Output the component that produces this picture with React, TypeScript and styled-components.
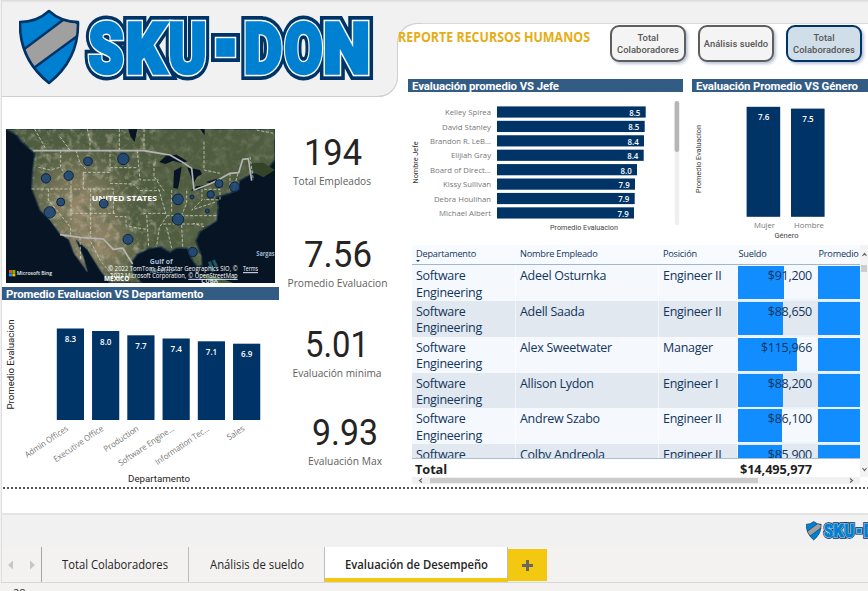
import React from "react";
import styled, { createGlobalStyle } from "styled-components";

const SANS = '"Open Sans", "Noto Sans", sans-serif';
const DIN = 'Roboto, "Liberation Sans", sans-serif';
const NAVY = "#003366";

const GlobalStyle = createGlobalStyle`
  * { box-sizing: border-box; }
  body { margin: 0; overflow: hidden; background: #f1f1f1; font-family: ${SANS}; }
`;

const Window = styled.div`
  width: 868px;
  height: 591px;
  overflow: hidden;
  display: flex;
  flex-direction: column;
  background: #f1f1f1;
`;

const Canvas = styled.main`
  height: 515px;
  flex: none;
  display: flex;
  margin-left: 1px;
  border-left: 1px solid #dedede;
  border-bottom: 2px solid #e3e3e3;
  background: #fff;
  position: relative;
  &::before {
    content: "";
    position: absolute;
    z-index: 1;
    inset: 0 0 auto 0;
    height: 3px;
    background: linear-gradient(#d9d9d9, #f1f1f1);
  }
  &::after {
    content: "";
    position: absolute;
    left: 1px;
    right: 0;
    top: 487px;
    height: 2px;
    background: repeating-linear-gradient(90deg, #555 0 2px, #fff 2px 4px);
  }
`;

const LeftSide = styled.div`
  width: 396px;
  flex: none;
  display: flex;
  flex-direction: column;
`;

const LogoPanel = styled.header`
  height: 97px;
  padding: 9px 0 0 17px;
  background: #f1f1f1;
  border-bottom: 1px solid #cfcfcf;
  border-radius: 0 0 20px 0;
  position: relative;
  &::after {
    content: "";
    position: absolute;
    right: 0;
    bottom: -1px;
    width: 24px;
    height: 54px;
    border: solid #cfcfcf;
    border-width: 0 1px 1px 0;
    border-radius: 0 0 20px 0;
  }
`;

const LeftBody = styled.div`
  display: flex;
  padding-top: 32px;
`;

const LeftCharts = styled.div`
  width: 277px;
  svg { display: block; }
`;

const MapFrame = styled.div`
  margin: 0 0 4px 4px;
  height: 154px;
`;

const TitleBar = styled.h2<{ $w: number }>`
  margin: 0;
  width: ${(p) => p.$w}px;
  height: 13px;
  padding-left: 4px;
  background: #335c85;
  color: #fff;
  font: 700 11.4px/14px ${DIN};
  letter-spacing: -0.1px;
  white-space: nowrap;
`;

const Kpis = styled.div`
  width: 119px;
  display: flex;
  flex-direction: column;
`;

const Kpi = styled.div<{ $h: number }>`
  height: ${(p) => p.$h}px;
  svg { display: block; }
`;

const RightSide = styled.div`
  width: 470px;
  background: linear-gradient(#f1f1f1 97px, #fff 97px);
  padding-top: 23px;
`;

const RightPanel = styled.div`
  height: 490px;
  background: #fff;
  border-radius: 20px 0 0 0;
  border-top: 1px solid #d8d8d8;
  position: relative;
  &::before {
    content: "";
    position: absolute;
    left: -1px;
    top: -1px;
    width: 24px;
    height: 22px;
    border: solid #cfcfcf;
    border-width: 1px 0 0 1px;
    border-radius: 20px 0 0 0;
  }
`;

const HeadRow = styled.div`
  display: flex;
  height: 55px;
  padding-top: 1px;
`;

const ReportTitle = styled.h1`
  margin: 0;
  width: 212px;
  flex: none;
  padding-top: 2px;
  position: relative;
  svg { display: block; }
`;

const NavButtons = styled.div`
  display: flex;
  gap: 12px;
`;

const NavButton = styled.button<{ $active?: boolean }>`
  width: 76px;
  height: 37px;
  padding: 0;
  flex: none;
  border: 2px solid ${(p) => (p.$active ? NAVY : "#605e5c")};
  border-radius: 9px;
  background: ${(p) => (p.$active ? "#d0deea" : "#f4f4f4")};
  color: #555;
  box-shadow: 2px 2px 3px rgba(60, 90, 150, 0.35);
  font: 500 9.4px/12px ${DIN};
  letter-spacing: 0.05px;
`;

const ChartRow = styled.div`
  display: flex;
  gap: 9px;
  padding-left: 10px;
  svg { display: block; }
`;

const TableFrame = styled.section`
  display: grid;
  grid-template-columns: 448px 8px;
  grid-template-rows: 214px 18px 7px;
  margin: 6px 0 0 14px;
  color: #12355b;
`;

const Cols = styled.div`
  display: grid;
  grid-template-columns: 104px 143px 79px 80px 42px;
`;

const TableClip = styled.div`
  overflow: hidden;
  border-bottom: 1px solid #a9bdd4;
`;

const HeadCells = styled(Cols)`
  height: 20px;
  border-bottom: 1px solid #9fb6d1;
  background: #f7fafe;
  font: 9.2px/18px ${SANS};
  letter-spacing: -0.22px;
  white-space: nowrap;
`;

const HeadCell = styled.div<{ $sorted?: boolean; $pad?: number }>`
  padding-left: ${(p) => p.$pad ?? 4}px;
  position: relative;
  &::after {
    content: "";
    display: ${(p) => (p.$sorted ? "block" : "none")};
    position: absolute;
    left: 4px;
    top: 15px;
    border: 2.5px solid transparent;
    border-top-color: #12355b;
  }
`;

const Row = styled(Cols)<{ $odd: boolean }>`
  height: 35.85px;
  background: ${(p) => (p.$odd ? "#e1e8f0" : "#f5f9fe")};
  font: 12.5px/16.5px ${SANS};
  letter-spacing: -0.28px;
`;

const Cell = styled.div`
  padding: 3px 0 0 4px;
  border-right: 1px solid rgba(255, 255, 255, 0.6);
  white-space: pre-line;
`;

const BarCell = styled.div<{ $w: number }>`
  padding: 3px 6px 0 0;
  text-align: right;
  border-bottom: 2px solid #eaf2fb;
  background: linear-gradient(#118dff, #118dff) 0 1px / ${(p) => p.$w}px 100% no-repeat;
`;

const TotalRow = styled(Cols)`
  color: #1f1f1f;
  font: 700 12.8px/20px ${SANS};
  letter-spacing: -0.1px;
`;

const TotalCell = styled.div<{ $right?: boolean }>`
  padding: 0 6px 0 3px;
  display: flex;
  white-space: nowrap;
  justify-content: ${(p) => (p.$right ? "flex-end" : "flex-start")};
`;

const VScroll = styled.div`
  grid-row: 1 / 3;
  grid-column: 2;
  background: #f3f3f3;
  display: flex;
  flex-direction: column;
  align-items: center;
  justify-content: space-between;
  padding: 7px 0 5px;
`;

const VTop = styled.div`
  display: flex;
  flex-direction: column;
  align-items: center;
  gap: 8px;
`;

const VThumb = styled.div`
  width: 6px;
  height: 7px;
  background: #cdcdcd;
`;

const HScroll = styled.div`
  height: 7px;
  background: #f1f1f1;
  display: flex;
  align-items: center;
  padding: 0 6px;
`;

const HThumb = styled.div`
  width: 328px;
  height: 5px;
  margin: 0 auto 0 7px;
  background: #cbcbcb;
`;

const Strip = styled.div`
  height: 32px;
  flex: none;
  margin-left: 1px;
  border-left: 1px solid #dedede;
  display: flex;
  justify-content: flex-end;
  overflow: hidden;
`;

const MiniLogo = styled.div`
  width: 62px;
  padding-top: 6px;
  flex: none;
`;

const TabBar = styled.nav`
  height: 36px;
  flex: none;
  display: flex;
  margin-left: 1px;
  border-left: 1px solid #dedede;
  border-bottom: 1px solid #d8d8d8;
  background: #f3f2f1;
`;

const Arrows = styled.div`
  width: 40px;
  padding: 13px 0 0 6px;
  border-right: 1px solid #a5a5a5;
  svg { display: block; }
`;

const Tab = styled.div<{ $w: number; $active?: boolean }>`
  width: ${(p) => p.$w}px;
  height: 35px;
  flex: none;
  display: flex;
  justify-content: center;
  border-right: 1px solid #bdbdbd;
  border-bottom: ${(p) => (p.$active ? "4px solid #f2c811" : "0")};
  background: ${(p) => (p.$active ? "#fff" : "#f3f2f1")};
  svg { display: block; }
`;

const AddTab = styled.div`
  width: 39px;
  height: 32px;
  margin-top: 2px;
  display: grid;
  place-items: center;
  background: #f2c811;
`;

const StatusBar = styled.footer`
  height: 8px;
  flex: none;
  overflow: hidden;
  padding: 3px 0 0 13px;
  background: #f3f2f1;
  color: #333;
  font: 11px/14px ${SANS};
`;

type LabelProps = {
  x: number;
  y: number;
  w: number;
  size: number;
  children: string;
  fill?: string;
  weight?: number;
  font?: string;
  rotate?: number;
};

/* A chart label set to an exact advance width. */
const Label = ({ x, y, w, size, children, fill = "#777", weight = 400, font = SANS, rotate }: LabelProps) => (
  <text
    x={x}
    y={y}
    textLength={w}
    lengthAdjust="spacingAndGlyphs"
    fontSize={size}
    fontFamily={font}
    fontWeight={weight}
    fill={fill}
    transform={rotate ? `rotate(${rotate} ${x} ${y})` : undefined}
  >
    {children}
  </text>
);

const logoLetters: [string, number, number][] = [
  ["S", 69.5, 35],
  ["K", 107, 40],
  ["U", 149.5, 38],
  ["D", 225, 38],
  ["O", 265.5, 38],
  ["N", 304, 47],
];

const SHIELD = "M30 2Q42 13 59 13Q60 50 30 74Q0 50 1 13Q18 13 30 2Z";

const Logo = ({ width, id }: { width: number; id: string }) => (
  <svg width={width} viewBox="0 0 358 76">
    <defs>
      <clipPath id={`${id}-shield`}>
        <path d={SHIELD} />
      </clipPath>
      <g id={`${id}-word`} strokeMiterlimit="3" fontFamily="Roboto, sans-serif" fontWeight={900} fontSize={70}>
        {logoLetters.map(([c, x, w]) => (
          <text key={c} x={x} y={63.5} textLength={w} lengthAdjust="spacingAndGlyphs">{c}</text>
        ))}
        <rect x="199" y="31" width="15" height="15" />
      </g>
    </defs>
    <g clipPath={`url(#${id}-shield)`}>
      <rect width="60" height="76" fill="#0080d0" />
      <path d="M-4 47L48 8L68 20L8 64Z" fill="#a0a0a0" stroke={NAVY} strokeWidth="2.4" />
    </g>
    <path d={SHIELD} fill="none" stroke={NAVY} strokeWidth="2.6" strokeLinejoin="round" />
    <use href={`#${id}-word`} fill={NAVY} stroke={NAVY} strokeWidth="14" strokeLinejoin="miter" />
    <use href={`#${id}-word`} fill="#fff" stroke="#fff" strokeWidth="6.5" strokeLinejoin="miter" />
    <use href={`#${id}-word`} fill="#0080d0" stroke="#0080d0" strokeWidth="3.6" strokeLinejoin="miter" />
  </svg>
);

const bubbles: [number, number, number][] = [
  [264, 124, 13], [370, 117, 17], [138, 175, 14], [206, 167, 14], [182, 246, 12],
  [149, 277, 17], [311, 251, 13], [534, 238, 16], [534, 298, 17], [576, 231, 6],
  [632, 223, 11], [657, 191, 12], [704, 201, 15], [622, 273, 6], [384, 358, 15], [578, 396, 14],
];

const LAND =
  "M18 27L50 45L62 62L104 100L98 150L95 205L120 270L150 300L180 342L206 358L222 400L262 455L250 410L226 358L262 388L300 450L330 489H425L398 455L396 425L412 403L450 385L482 380L510 397L530 384L562 385L574 415L592 441L606 436L604 408L588 362L600 335L650 302L655 262L650 232L690 220L716 208L718 182L756 160L800 150L825 120V27Z";

const STATES =
  "M182 91V142L208 182M115 142L150 150L180 142M95 207H240M145 207V240L212 322V345M213 182V300M228 91L240 130L262 150M250 157V207M250 157H330V91M250 207H340V280M212 280H345M272 207V352M330 143H412M330 190L400 192L420 212H480M340 240H430M345 290H378V318L440 328M412 91L420 180H476M476 207L490 255L500 290L478 322L470 380M430 280H500M440 285L446 380M500 322L515 385M545 315L548 380M490 312H610M500 287H650M462 130V170L494 215M515 210V275M560 212V250L545 285M606 208V240L575 270L650 245M612 208H660V240L612 238M612 320L580 310M690 160V210M700 210L714 160M660 176V205M262 27L270 60V90M358 27V91M432 27V85M612 65V150L660 160M180 50L210 91M104 27L140 91M820 40L770 30M750 110L760 180M240 352L242 420M272 365L300 420L340 470";

const Lake = styled.path`
  fill: #081424;
`;

const UsMap = () => (
  <svg width="269" height="154" viewBox="18 27 807 462">
    <defs>
      <radialGradient id="dry" cx="0.5" cy="0.5" r="0.5">
        <stop offset="0" stopColor="#a08e70" stopOpacity="0.9" />
        <stop offset="1" stopColor="#a08e70" stopOpacity="0" />
      </radialGradient>
      <filter id="terrain" x="0" y="0" width="100%" height="100%">
        <feTurbulence type="fractalNoise" baseFrequency="0.028" numOctaves="5" seed="8" />
        <feColorMatrix values="0 0 0 0 0.12  0 0 0 0 0.15  0 0 0 0 0.08  2.2 0 0 0 -1.1" />
      </filter>
      <filter id="relief" x="0" y="0" width="100%" height="100%">
        <feTurbulence type="fractalNoise" baseFrequency="0.05" numOctaves="4" seed="21" />
        <feColorMatrix values="0 0 0 0 0.68  0 0 0 0 0.64  0 0 0 0 0.52  0 2.4 0 0 -1.15" />
      </filter>
      <clipPath id="land"><path d={LAND} /></clipPath>
    </defs>
    <rect x="18" y="27" width="807" height="462" fill="#071424" />
    <path d={LAND} fill="#4f5c3f" stroke="#1c3442" strokeWidth="5" />
    <g clipPath="url(#land)">
      <ellipse cx="235" cy="260" rx="170" ry="190" fill="url(#dry)" />
      <ellipse cx="300" cy="380" rx="130" ry="120" fill="url(#dry)" />
      <rect x="18" y="27" width="807" height="462" filter="url(#terrain)" />
      <rect x="18" y="27" width="450" height="462" filter="url(#relief)" opacity="0.5" />
      <rect x="468" y="27" width="357" height="462" filter="url(#relief)" opacity="0.2" />
    </g>
    <Lake d="M478 126L500 106L530 104L562 124L545 130L520 122L496 132Z" />
    <Lake d="M522 152L545 140L540 175L534 206L520 204Z" />
    <Lake d="M562 142L600 150L606 162L592 170L580 190L572 168Z" />
    <Lake d="M572 212L590 198L622 196L596 210Z" />
    <Lake d="M618 186L650 176L654 182L630 190Z" />
    <Lake d="M385 27H412L404 66L392 50ZM600 27H614V45Z" />
    <path d="M740 130L790 128L825 150L790 172L765 160Z" fill="#344429" />
    <path d="M600 462L650 470L700 489H640Z" fill="#42603a" />
    <path d="M628 425L640 455M650 440L640 420" stroke="#2e8291" strokeWidth="9" opacity="0.6" />
    <path d={STATES} fill="none" stroke="#d0d3c2" strokeWidth="2.8" strokeDasharray="9 5" opacity="0.85" />
    <path
      d="M100 92H432L480 100L510 105L545 125L575 145L582 210L620 196L650 182L690 160L716 158L728 118L745 116L755 182M180 344L240 352L310 357L340 388L368 384L398 432"
      fill="none"
      stroke="#b5b5b5"
      strokeWidth="5"
      strokeLinejoin="round"
    />
    <Label x={275} y={244} w={196} size={23} weight={700} fill="#fff">UNITED STATES</Label>
    <Label x={449} y={433} w={69} size={20} weight={700} fill="#a6bdd3">Gulf of</Label>
    <Label x={449} y={459} w={70} size={19} weight={600} fill="#7892ab">Mexico</Label>
    <Label x={769} y={408} w={55} size={19} weight={700} fill="#9fb8d0">Sargas</Label>
    <Label x={312} y={484} w={76} size={20} weight={700} fill="#fff">MEXICO</Label>
    <Label x={604} y={488} w={50} size={18} weight={700} fill="#dce6ec">CUBA</Label>
    <Label x={325} y={454} w={388} size={19} fill="#fff">© 2022 TomTom, Earthstar Geographics SIO, ©</Label>
    <Label x={331} y={474} w={228} size={19} fill="#fff">2022 Microsoft Corporation,</Label>
    <Label x={565} y={474} w={148} size={19} fill="#fff">© OpenStreetMap</Label>
    <Label x={729} y={454} w={45} size={19} fill="#fff">Terms</Label>
    <Label x={50} y={466} w={106} size={17} weight={600} fill="#eee">Microsoft Bing</Label>
    <path d="M565 478H713M729 458H774" stroke="#dfe8ff" strokeWidth="3" />
    <rect x="27" y="450" width="9" height="9" fill="#f25022" />
    <rect x="37" y="450" width="9" height="9" fill="#7fba00" />
    <rect x="27" y="460" width="9" height="9" fill="#00a4ef" />
    <rect x="37" y="460" width="9" height="9" fill="#ffb900" />
    {bubbles.map(([x, y, r]) => (
      <circle key={`${x}-${y}`} cx={x} cy={y} r={r} fill="#1c4577" fillOpacity="0.85" stroke="#0a2447" strokeWidth="3" />
    ))}
  </svg>
);

const departments = [
  { name: "Admin Offices", value: "8.3", h: 91.5, len: 50 },
  { name: "Executive Office", value: "8.0", h: 89, len: 58 },
  { name: "Production", value: "7.7", h: 84.7, len: 40 },
  { name: "Software Engine...", value: "7.4", h: 81.5, len: 65 },
  { name: "Information Tec...", value: "7.1", h: 78.7, len: 63 },
  { name: "Sales", value: "6.9", h: 76.3, len: 19 },
];

const LABEL_ANGLE = 34;

const DepartmentChart = () => (
  <svg width="277" height="187" viewBox="2 300 277 187">
    <Label x={14} y={409.5} w={90} size={9.2} fill="#252423" font={DIN} rotate={-90}>Promedio Evaluacion</Label>
    {departments.map((d, i) => {
      const x = 56.8 + i * 35.25;
      const top = 420 - d.h;
      const a = (LABEL_ANGLE * Math.PI) / 180;
      return (
        <g key={d.name}>
          <rect x={x} y={top} width="27.2" height={d.h} fill={NAVY} />
          <Label x={x + 8} y={top + 13.5} w={11.4} size={8.2} fill="#fff" weight={600}>{d.value}</Label>
          <Label
            x={x + 12 - d.len * Math.cos(a)}
            y={430 + d.len * Math.sin(a)}
            w={d.len}
            size={8.4}
            rotate={-LABEL_ANGLE}
          >
            {d.name}
          </Label>
        </g>
      );
    })}
    <Label x={128} y={482} w={62} size={9.6} fill="#252423" font={DIN}>Departamento</Label>
  </svg>
);

const bosses = [
  { name: "Kelley Spirea", value: "8.5", w: 148.7, len: 46 },
  { name: "David Stanley", value: "8.5", w: 147.7, len: 49 },
  { name: "Brandon R. LeB...", value: "8.4", w: 147, len: 61 },
  { name: "Elijiah Gray", value: "8.4", w: 146.7, len: 40 },
  { name: "Board of Direct...", value: "8.0", w: 140, len: 61 },
  { name: "Kissy Sullivan", value: "7.9", w: 138, len: 48 },
  { name: "Debra Houlihan", value: "7.9", w: 137.7, len: 57 },
  { name: "Michael Albert", value: "7.9", w: 137, len: 52 },
];

const BossChart = () => (
  <svg width="275" height="147" viewBox="408 92 275 147">
    <Label x={418} y={183.5} w={42} size={6.6} fill="#333" font={DIN} rotate={-90}>Nombre Jefe</Label>
    {bosses.map((b, i) => {
      const y = 106.4 + i * 14.42;
      return (
        <g key={b.name}>
          <Label x={491 - b.len} y={y + 8.8} w={b.len} size={8}>{b.name}</Label>
          <rect x="497" y={y} width={b.w} height="11.2" fill={NAVY} />
          <Label x={497 + b.w - 16.5} y={y + 9.5} w={11.2} size={8.2} fill="#fff" weight={600}>{b.value}</Label>
        </g>
      );
    })}
    <Label x={550} y={230} w={68} size={7} fill="#444" font={DIN}>Promedio Evaluacion</Label>
    <rect x="674.6" y="101" width="4.6" height="124" rx="2.3" fill="#efefef" />
    <rect x="674.6" y="101" width="4.6" height="51" rx="2.3" fill="#b5b5b5" />
  </svg>
);

const GenderChart = () => (
  <svg width="176" height="147" viewBox="692 92 176 147">
    <Label x={701} y={193} w={68} size={6.8} fill="#444" font={DIN} rotate={-90}>Promedio Evaluacion</Label>
    <rect x="746.6" y="106.8" width="33.6" height="110" fill={NAVY} />
    <rect x="791" y="108.6" width="33.6" height="108.2" fill={NAVY} />
    <Label x={758} y={120} w={11.4} size={8.2} fill="#fff" weight={600}>7.6</Label>
    <Label x={802.3} y={122} w={11.4} size={8.2} fill="#fff" weight={600}>7.5</Label>
    <Label x={754} y={228} w={21} size={8}>Mujer</Label>
    <Label x={794} y={228} w={30} size={8}>Hombre</Label>
    <Label x={774.5} y={238} w={24} size={6.8} fill="#444" font={DIN}>Género</Label>
  </svg>
);

const kpis = [
  { value: "194", label: "Total Empleados", h: 101.5, vx: 26, vw: 56, lx: 14, lw: 78 },
  { value: "7.56", label: "Promedio Evaluacion", h: 90, vx: 26, vw: 66, lx: 8.5, lw: 100 },
  { value: "5.01", label: "Evaluación minima", h: 88.5, vx: 27, vw: 62, lx: 13.5, lw: 89 },
  { value: "9.93", label: "Evaluación Max", h: 70, vx: 34, vw: 64, lx: 29, lw: 74 },
];

const rows: [string, string, string, number][] = [
  ["Adeel Osturnka", "Engineer II", "$91,200", 46],
  ["Adell Saada", "Engineer II", "$88,650", 45],
  ["Alex Sweetwater", "Manager", "$115,966", 59],
  ["Allison Lydon", "Engineer I", "$88,200", 45],
  ["Andrew Szabo", "Engineer II", "$86,100", 44],
  ["Colby Andreola", "Engineer II", "$85,900", 44],
];

const Chevron = ({ d }: { d: string }) => (
  <svg width="5" height="5" viewBox="0 0 5 5">
    <path d={d} fill="none" stroke="#606060" strokeWidth="1.1" />
  </svg>
);

const TabText = ({ w, weight, children }: { w: number; weight?: number; children: string }) => (
  <svg width={w} height="31" viewBox={`0 0 ${w} 31`}>
    <Label x={0} y={22} w={w} size={12.3} fill="#252423" weight={weight}>{children}</Label>
  </svg>
);

export default function App() {
  return (
    <Window>
      <GlobalStyle />
      <Canvas>
        <LeftSide>
          <LogoPanel><Logo width={358} id="brand" /></LogoPanel>
          <LeftBody>
            <LeftCharts>
              <MapFrame><UsMap /></MapFrame>
              <TitleBar $w={277}>Promedio Evaluacion VS Departamento</TitleBar>
              <DepartmentChart />
            </LeftCharts>
            <Kpis>
              {kpis.map((k) => (
                <Kpi key={k.label} $h={k.h}>
                  <svg width="119" height="64" viewBox="0 0 119 64">
                    <Label x={k.vx - 1} y={36} w={k.vw + 2} size={36.5} fill="#252423" font={DIN}>{k.value}</Label>
                    <Label x={k.lx} y={56} w={k.lw} size={11} fill="#605e5c">{k.label}</Label>
                  </svg>
                </Kpi>
              ))}
            </Kpis>
          </LeftBody>
        </LeftSide>
        <RightSide>
          <RightPanel>
            <HeadRow>
              <ReportTitle>
                <svg width="194" height="20" viewBox="0 0 194 20">
                  <Label x={0} y={15} w={192} size={13.4} weight={700} fill="#e6ad15">REPORTE RECURSOS HUMANOS</Label>
                </svg>
              </ReportTitle>
              <NavButtons>
                <NavButton>Total Colaboradores</NavButton>
                <NavButton>Análisis sueldo</NavButton>
                <NavButton $active>Total Colaboradores</NavButton>
              </NavButtons>
            </HeadRow>
            <ChartRow>
              <div>
                <TitleBar $w={275}>Evaluación promedio VS Jefe</TitleBar>
                <BossChart />
              </div>
              <div>
                <TitleBar $w={176}>Evaluación Promedio VS Género</TitleBar>
                <GenderChart />
              </div>
            </ChartRow>
            <TableFrame>
              <TableClip>
                <HeadCells>
                  <HeadCell $sorted>Departamento</HeadCell>
                  <HeadCell>Nombre Empleado</HeadCell>
                  <HeadCell>Posición</HeadCell>
                  <HeadCell $pad={0.5}>Sueldo</HeadCell>
                  <HeadCell $pad={0.5}>Promedio</HeadCell>
                </HeadCells>
                {rows.map(([name, role, pay, w], i) => (
                  <Row key={name} $odd={i % 2 === 1}>
                    <Cell>{"Software\nEngineering"}</Cell>
                    <Cell>{name}</Cell>
                    <Cell>{role}</Cell>
                    <BarCell $w={w}>{pay}</BarCell>
                    <BarCell $w={42} />
                  </Row>
                ))}
              </TableClip>
              <VScroll>
                <VTop>
                  <Chevron d="M0.5 4L2.5 1.5L4.5 4" />
                  <VThumb />
                </VTop>
                <Chevron d="M0.5 1L2.5 3.5L4.5 1" />
              </VScroll>
              <TotalRow>
                <TotalCell>Total</TotalCell>
                <TotalCell />
                <TotalCell />
                <TotalCell $right>$14,495,977</TotalCell>
              </TotalRow>
              <HScroll>
                <Chevron d="M4 0.5L1.5 2.5L4 4.5" />
                <HThumb />
                <Chevron d="M1 0.5L3.5 2.5L1 4.5" />
              </HScroll>
            </TableFrame>
          </RightPanel>
        </RightSide>
      </Canvas>
      <Strip>
        <MiniLogo><Logo width={92} id="mini" /></MiniLogo>
      </Strip>
      <TabBar>
        <Arrows>
          <svg width="28" height="10" viewBox="0 0 28 10">
            <path d="M5 0.5V9.5L0 5ZM22 0.5V9.5L27 5Z" fill="#c8c6c4" />
          </svg>
        </Arrows>
        <Tab $w={147}><TabText w={106}>Total Colaboradores</TabText></Tab>
        <Tab $w={136}><TabText w={94}>Análisis de sueldo</TabText></Tab>
        <Tab $w={183} $active><TabText w={143} weight={600}>Evaluación de Desempeño</TabText></Tab>
        <AddTab>
          <svg width="11" height="11" viewBox="0 0 11 11">
            <path d="M5.5 0V11M0 5.5H11" stroke="#6b6660" strokeWidth="3" />
          </svg>
        </AddTab>
      </TabBar>
      <StatusBar>28</StatusBar>
    </Window>
  );
}
